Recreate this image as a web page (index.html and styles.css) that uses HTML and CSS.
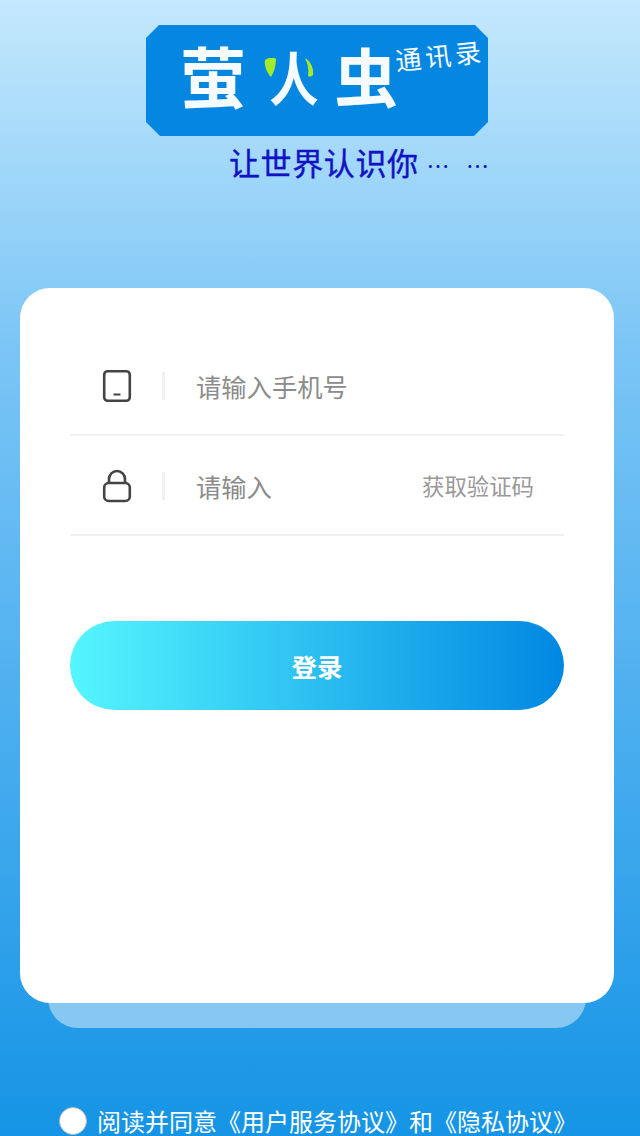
FILE: index.html

```html
<!DOCTYPE html>
<html lang="zh-CN">
<head>
<meta charset="UTF-8">
<title>萤火虫通讯录</title>
<link rel="stylesheet" href="styles.css">
</head>
<body>
<div class="page">
  <div class="brand">
    <div class="logo">
      <span class="logo-word logo-ying">萤</span>
      <span class="logo-word logo-fire">人</span>
      <span class="logo-word logo-bug">虫</span>
      <svg class="leaves" width="50" height="19" viewBox="0 0 50 19">
        <path d="M1 2 C5 -1 10 -1 12 1 C12 8 10 14 7 19 C3 15 0 8 1 2Z" fill="#a4ec2a"/>
        <path d="M41 0 C46 3 50 9 49 17 C47 19 45 19 44 18 C45 12 44 6 41 0Z" fill="#a4ec2a"/>
      </svg>
      <span class="logo-sub">通讯录</span>
    </div>
    <div class="slogan">让世界认识你<span class="slogan-dots">… …</span></div>
  </div>

  <div class="card">
    <div class="field">
      <svg class="field-icon" width="30" height="34" viewBox="0 0 30 34" fill="none" stroke="#444" stroke-width="2.6">
        <rect x="2.2" y="2.2" width="25.6" height="29.6" rx="3.5"/>
        <path d="M11.5 25.5 H18.5" stroke-width="2"/>
      </svg>
      <span class="field-sep"></span>
      <input class="field-input" type="text" placeholder="请输入手机号">
    </div>
    <div class="field">
      <svg class="field-icon" width="30" height="34" viewBox="0 0 30 34" fill="none" stroke="#444" stroke-width="2.6">
        <rect x="2.2" y="14" width="25.6" height="18" rx="4.5"/>
        <path d="M7 14 V10 A8 8 0 0 1 23 10 V14"/>
      </svg>
      <span class="field-sep"></span>
      <input class="field-input" type="text" placeholder="请输入">
      <span class="get-code">获取验证码</span>
    </div>
    <button class="login-btn">登录</button>
  </div>

  <div class="agree">
    <span class="agree-check"></span>
    <span class="agree-text">阅读并同意《用户服务协议》和《隐私协议》</span>
  </div>
</div>
</body>
</html>
```

FILE: styles.css

```css
* { box-sizing: border-box; }
html, body { margin: 0; height: 1136px; overflow: hidden; }
body { font-family: "Noto Sans CJK SC", "Noto Sans", sans-serif; }

.page { height: 1136px; padding-top: 25px; display: flex; flex-direction: column;
        background: linear-gradient(180deg, #c4e8fc 0%, #7cc6f6 30%, #3aa6ec 75%, #1594e5 100%); }

.brand { height: 263px; padding-left: 146px; }
.logo { position: relative; width: 342px; height: 111px; padding: 7px 0 0 34px; display: flex;
        background: #0587e1; color: #f6fbff;
        clip-path: polygon(13px 0, 329px 0, 342px 13px, 342px 97px, 328px 111px, 14px 111px, 0 97px, 0 13px); }
.logo-word { font-weight: 700; line-height: 84px; }
.logo-ying { font-size: 66px; }
.logo-fire { font-size: 58px; margin: 2px 11px 0 19px; transform: scaleX(0.85); }
.logo-bug { font-size: 64px; }
.leaves { position: absolute; left: 118px; top: 33px; }
.logo-sub { position: absolute; left: 249px; top: 13px; font-size: 26px; line-height: 34px; letter-spacing: 4px;
            transform: rotate(-6deg); }
.slogan { margin: 5px 0 0 83px; font-size: 31px; line-height: 42px; letter-spacing: 0.6px; color: #1212c4;
          -webkit-text-stroke: 0.4px #1212c4; white-space: nowrap; }
.slogan-dots { font-size: 23px; word-spacing: 10px; margin-left: 8px; -webkit-text-stroke: 0; }

.card { position: relative; width: 594px; height: 715px; margin-left: 20px; padding: 48px 50px 0;
        background: #fff; border-radius: 30px; }
.card::after { content: ""; position: absolute; left: 28px; right: 28px; bottom: -25px; height: 60px; z-index: 0;
               background: rgba(255, 255, 255, 0.45); border-radius: 0 0 30px 30px; clip-path: inset(35px 0 0 0); }

.field { height: 100px; padding: 0 30px 0 32px; display: flex; align-items: center; border-bottom: 2px solid #f1f1f1; }
.field-icon { flex: none; margin-top: 2px; }
.field-sep { flex: none; width: 3px; height: 28px; margin: 2px 31px 0 30px; background: #f1f1f1; }
.field-input { flex: 1; min-width: 0; height: 40px; padding: 0; margin-top: 2px; border: none; outline: none; background: none;
               font: 25.3px "Noto Sans CJK SC", sans-serif; color: #333; }
.field-input::placeholder { color: #8b8b8b; opacity: 1; }
.get-code { font-size: 22.4px; color: #999; white-space: nowrap; }

.login-btn { display: block; width: 100%; height: 89px; margin-top: 85px; border: none; border-radius: 45px;
             background: linear-gradient(90deg, #55f6ff 0%, #0187e2 100%); color: #fff;
             font: 700 25.5px "Noto Sans CJK SC", sans-serif; }

.agree { margin-top: 104px; padding-left: 59px; display: flex; align-items: center; gap: 10px; height: 28px;
         font-size: 24px; line-height: 28px; color: #fff; white-space: nowrap; }
.agree-check { flex: none; width: 28px; height: 28px; border-radius: 50%; background: #fff; border: 1px solid #bbb; }
.agree-text { margin-top: -1px; }
```
